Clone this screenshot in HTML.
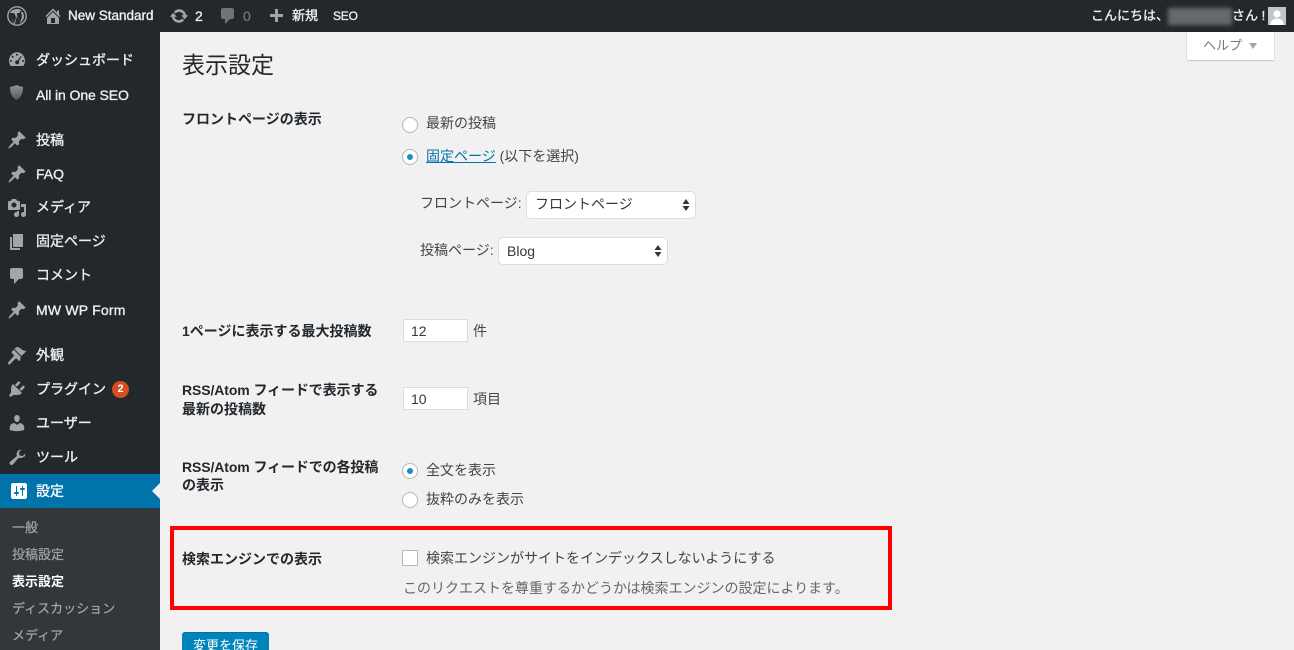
<!DOCTYPE html>
<html lang="ja"><head><meta charset="utf-8"><title>表示設定</title>
<style>
html,body{margin:0;padding:0;width:1294px;height:650px;overflow:hidden}
body{background:#f1f1f1;font:14px/20px "Liberation Sans","Noto Sans CJK JP",sans-serif;color:#444}
#w{position:relative;width:1294px;height:650px;overflow:hidden;background:#f1f1f1}
.a{position:absolute;white-space:nowrap}
#bar{position:absolute;left:0;top:0;width:1294px;height:32px;background:#23282d}
#side{position:absolute;left:0;top:32px;width:160px;height:618px;background:#23282d}
.m{color:#eee;left:36px;-webkit-text-stroke:.35px #eee}
.s{color:#a3a7ab;font-size:13px;left:12px;-webkit-text-stroke:.2px #a3a7ab}
.t{color:#eee;font-size:13px;-webkit-text-stroke:.35px #eee}
.l{color:#23282d;font-weight:700;left:182px}
.i{position:absolute;fill:#a0a5aa}
.radio{position:absolute;left:402px;width:14px;height:14px;border:1px solid #b4b9be;border-radius:50%;background:#fff}
.radio.on:after{content:"";position:absolute;left:4px;top:4px;width:6px;height:6px;border-radius:50%;background:#1e8cbe}
.sel{position:absolute;background:#fff;border:1px solid #ddd;border-radius:5px;height:26px;color:#32373c;line-height:24px}
.num{position:absolute;left:403px;width:63px;height:21px;background:#fff;border:1px solid #ddd;color:#32373c;line-height:21px}
</style></head><body><div id="w">
<div id="bar"></div>
<div id="side"></div>
<div class="a" style="left:0;top:474px;width:160px;height:34px;background:#0073aa"></div>
<div class="a" style="left:0;top:508px;width:160px;height:142px;background:#32373c"></div>
<div class="a" style="left:152px;top:483px;width:0;height:0;border:8px solid transparent;border-left:0;border-right-color:#f1f1f1"></div>

<!-- admin bar icons -->
<svg class="i" style="left:7px;top:6px" width="20" height="20" viewBox="0 0 20 20"><circle cx="10" cy="10" r="9.200" fill="none" stroke="#a0a5aa" stroke-width="1.400"/><path d="M3 7.200L7 17.500 9 11.700 7.600 7.400H6.300V6.700H11V7.400H9.600L12.900 17.300 14.600 11.900C15.200 10 15 8.800 14.200 7.600 13.900 7 14.200 5.600 15.600 5.700 17 8.300 17.300 10.800 16.500 13L13.200 17.800 10 9.800 7.900 18 6.600 17.700Z"/><path d="M3 6.800C4.400 4.400 7 3 10 3c2 0 3.700.7 5 1.800-1.400-.2-2.400 1-2.200 2.200H3z"/></svg>
<svg class="i" style="left:43px;top:6px" width="20" height="20" viewBox="0 0 20 20"><path fill-rule="evenodd" d="M16 8.500l1.530 1.530-1.060 1.060L10 4.620l-6.470 6.470-1.060-1.060L10 2.500l4 4v-2h2v4zm-6-2.460l6 5.990V18H4v-5.970zM12 17v-5H8v5h4z"/></svg>
<svg class="i" style="left:169px;top:6px" width="20" height="20" viewBox="0 0 20 20"><path d="M10.200 3.280c3.530 0 6.430 2.610 6.920 6h2.080l-3.500 4-3.500-4h2.320c-.45-1.970-2.210-3.440-4.320-3.440-1.450 0-2.730.71-3.540 1.780L4.950 5.660C6.230 4.200 8.110 3.280 10.200 3.280zm-.4 13.440c-3.520 0-6.430-2.610-6.920-6H.8l3.500-4c1.170 1.330 2.330 2.670 3.500 4H5.480c.45 1.970 2.210 3.440 4.320 3.440 1.450 0 2.730-.71 3.540-1.780l1.710 1.950c-1.280 1.460-3.150 2.390-5.250 2.390z"/></svg>
<svg class="i" style="left:218px;top:6px" width="20" height="20" viewBox="0 0 20 20"><path fill="#6f7479" d="M5 2h9c1.100 0 2 .9 2 2v7c0 1.100-.9 2-2 2h-2l-5 5v-5H5c-1.100 0-2-.9-2-2V4c0-1.100.9-2 2-2z"/></svg>
<svg class="i" style="left:266px;top:7px" width="20" height="20" viewBox="0 0 20 20"><path d="M17 7v3h-5v5H9v-5H4V7h5V2h3v5h5z"/></svg>

<span class="a t" style="left:68px;top:6px;font-size:13.500px">New Standard</span>
<span class="a t" style="left:195px;top:6px;font-size:14px">2</span>
<span class="a t" style="left:243px;top:6px;color:#6f7479;-webkit-text-stroke:.35px #6f7479;font-size:14px">0</span>
<span class="a t" style="left:292px;top:6px">新規</span>
<span class="a t" style="left:333px;top:6px;font-size:12px;letter-spacing:-.2px">SEO</span>
<span class="a t" style="left:1091px;top:6px">こんにちは、</span>
<div class="a" style="left:1168px;top:8px;width:64px;height:17px;background:#66696d;filter:blur(2px)"></div>
<span class="a t" style="left:1232px;top:6px">さん !</span>
<svg class="a" style="left:1268px;top:7px" width="18" height="18" viewBox="0 0 18 18"><rect width="18" height="18" fill="#c4c4c4"/><circle cx="9" cy="7" r="3.600" fill="#fff"/><path d="M2.500 18c0-5 3-6.500 6.500-6.500s6.500 1.500 6.500 6.500z" fill="#fff"/></svg>

<!-- side icons -->
<svg class="i" style="left:7px;top:50px" width="20" height="20" viewBox="0 0 20 20"><path fill-rule="evenodd" d="M3.760 16h12.480c1.100-1.430 1.760-3.230 1.760-5.180 0-4.710-3.580-8.530-8-8.530s-8 3.820-8 8.530c0 1.950.66 3.750 1.760 5.180zM10 3.800a1 1 0 1 1 0 2 1 1 0 0 1 0-2zM5.700 5.800a1 1 0 1 1 0 2 1 1 0 0 1 0-2zM3.900 10a1 1 0 1 1 0 2 1 1 0 0 1 0-2zM16.100 10a1 1 0 1 1 0 2 1 1 0 0 1 0-2zM13.800 6l.9.5-2.900 4.700c.3.300.4.700.4 1.100a2 2 0 1 1-2-2c.2 0 .4 0 .6.100z"/></svg>
<svg class="a" style="left:9px;top:84px" width="15" height="17" viewBox="0 0 15 17"><defs><linearGradient id="g" x1="0" y1="0" x2="0" y2="1"><stop offset="0" stop-color="#929496"/><stop offset="1" stop-color="#55585b"/></linearGradient></defs><path d="M7.500 1C10 2.200 12 2.700 14 2.700c0 6-1.500 10.500-6.500 13.300C2.500 13.200 1 8.700 1 2.700 3 2.700 5 2.200 7.500 1z" fill="url(#g)"/></svg>
<svg class="i" style="left:7px;top:130px" width="20" height="20" viewBox="0 0 20 20"><path d="M10.440 3.020l1.820-1.820 6.360 6.350-1.830 1.820c-1.050-.68-2.480-.57-3.410.36l-.75.75c-.92.93-1.040 2.350-.35 3.410l-1.830 1.820-2.410-2.410-2.800 2.790c-.42.42-3.380 2.710-3.800 2.290s1.860-3.390 2.280-3.810l2.790-2.790L4.100 9.360l1.830-1.820c1.050.69 2.480.57 3.400-.36l.75-.75c.93-.92 1.050-2.350.36-3.410z"/></svg>
<svg class="i" style="left:7px;top:164px" width="20" height="20" viewBox="0 0 20 20"><path d="M10.440 3.020l1.820-1.820 6.360 6.350-1.830 1.820c-1.050-.68-2.480-.57-3.410.36l-.75.75c-.92.93-1.040 2.350-.35 3.410l-1.830 1.820-2.410-2.410-2.800 2.790c-.42.42-3.380 2.710-3.800 2.290s1.860-3.390 2.280-3.810l2.790-2.790L4.100 9.360l1.830-1.820c1.050.69 2.480.57 3.400-.36l.75-.75c.93-.92 1.050-2.350.36-3.410z"/></svg>
<svg class="i" style="left:7px;top:198px" width="20" height="20" viewBox="0 0 20 20"><path fill-rule="evenodd" d="M13 11V4c0-.55-.45-1-1-1h-1.670L9 1H5L3.670 3H2c-.55 0-1 .45-1 1v7c0 .55.45 1 1 1h10c.55 0 1-.45 1-1zM7 4.500c1.380 0 2.500 1.120 2.500 2.500S8.380 9.500 7 9.500 4.500 8.380 4.500 7 5.620 4.500 7 4.500zM14 6h5v10.500c0 1.380-1.120 2.500-2.500 2.500S14 17.880 14 16.500s1.120-2.500 2.500-2.500c.17 0 .34.020.5.050V9h-3V6zm-4 8.050V13h2v3.500c0 1.380-1.120 2.500-2.500 2.500S7 17.880 7 16.500 8.120 14 9.500 14c.17 0 .34.020.5.050z"/></svg>
<svg class="i" style="left:7px;top:232px" width="20" height="20" viewBox="0 0 20 20"><path d="M6 15V2h10v13H6zm-1 1h8v2H3V5h2v11z"/></svg>
<svg class="i" style="left:7px;top:266px" width="20" height="20" viewBox="0 0 20 20"><path d="M5 2h9c1.100 0 2 .9 2 2v7c0 1.100-.9 2-2 2h-2l-5 5v-5H5c-1.100 0-2-.9-2-2V4c0-1.100.9-2 2-2z"/></svg>
<svg class="i" style="left:7px;top:300px" width="20" height="20" viewBox="0 0 20 20"><path d="M10.440 3.020l1.820-1.820 6.360 6.350-1.830 1.820c-1.050-.68-2.480-.57-3.410.36l-.75.75c-.92.93-1.040 2.350-.35 3.410l-1.830 1.820-2.410-2.410-2.800 2.790c-.42.42-3.380 2.710-3.800 2.290s1.860-3.390 2.280-3.810l2.790-2.790L4.100 9.360l1.830-1.820c1.050.69 2.480.57 3.400-.36l.75-.75c.93-.92 1.050-2.350.36-3.410z"/></svg>
<svg class="i" style="left:7px;top:345px" width="20" height="20" viewBox="0 0 20 20"><path d="M14.480 11.060L7.410 3.990l1.500-1.500c.5-.56 2.300-.47 3.510.32 1.210.8 1.430 1.280 2.910 2.100 1.180.64 2.450 1.260 4.450.85zm-.71.71L6.700 4.700 4.830 6.570c-.39.39-.39 1.030 0 1.420l1.770 1.770c.39.39.39 1.020 0 1.410L1.350 17.240c-.78.78-.78 1.030 0 1.810.78.78 1.030.78 1.810 0l5.250-5.250c.39-.39 1.020-.39 1.410 0l1.770 1.770c.39.39 1.030.39 1.420 0z"/></svg>
<svg class="i" style="left:7px;top:379px" width="20" height="20" viewBox="0 0 20 20"><path d="M13.110 4.360L9.870 7.600 8 5.730l3.240-3.240c.35-.34 1.050-.2 1.560.32.52.51.66 1.210.31 1.550zm-8 1.770l.91-1.120 9.010 9.010-1.190.84c-.71.71-2.630 1.160-3.820 1.160H6.140L4.900 17.260c-.59.59-1.540.59-2.120 0-.59-.58-.59-1.530 0-2.120l1.240-1.240v-3.880c0-1.130.4-3.190 1.090-3.890zm7.260 3.970l3.240-3.240c.34-.35 1.040-.21 1.550.31.52.51.66 1.210.31 1.560l-3.240 3.240z"/></svg>
<svg class="i" style="left:7px;top:413px" width="20" height="20" viewBox="0 0 20 20"><path d="M10 9.250c-2.270 0-2.730-3.440-2.730-3.440C7 4.020 7.820 2 9.970 2c2.160 0 2.980 2.020 2.710 3.810 0 0-.41 3.440-2.680 3.440zm0 2.570L12.720 10c2.390 0 4.520 2.330 4.520 4.530v2.490s-3.650 1.130-7.240 1.130c-3.650 0-7.240-1.130-7.240-1.130v-2.490c0-2.250 1.940-4.480 4.470-4.480z"/></svg>
<svg class="i" style="left:7px;top:447px" width="20" height="20" viewBox="0 0 20 20"><path d="M16.680 9.770c-1.340 1.340-3.300 1.670-4.950.98l-5.820 6.770c-.76.76-2 .76-2.760 0-.76-.76-.76-2 0-2.760l6.770-5.820c-.69-1.650-.36-3.610.98-4.950 1.010-1.010 2.390-1.480 3.700-1.360l-2.650 2.650.6 3.170 3.170.6 2.650-2.650c.12 1.310-.35 2.690-1.360 3.700z"/></svg>
<svg class="a" style="left:9px;top:481px" width="20" height="20" viewBox="0 0 20 20"><path fill="#fff" fill-rule="evenodd" d="M18 16V4c0-1.100-.9-2-2-2H4c-1.100 0-2 .9-2 2v12c0 1.100.9 2 2 2h12c1.100 0 2-.9 2-2zM8 11h1c.55 0 1 .45 1 1s-.45 1-1 1H8v1.500c0 .28-.22.5-.5.5s-.5-.22-.5-.5V13H6c-.55 0-1-.45-1-1s.45-1 1-1h1V5.500c0-.28.22-.5.5-.5s.5.22.5.5V11zm5-2h-1c-.55 0-1-.45-1-1s.45-1 1-1h1V5.500c0-.28.22-.5.5-.5s.5.22.5.5V7h1c.55 0 1 .45 1 1s-.45 1-1 1h-1v5.500c0 .28-.22.5-.5.5s-.5-.22-.5-.5V9z"/></svg>

<!-- side text -->
<span class="a m" style="top:50px">ダッシュボード</span>
<span class="a m" style="top:85px;letter-spacing:-.1px">All in One SEO</span>
<span class="a m" style="top:130px">投稿</span>
<span class="a m" style="top:164px">FAQ</span>
<span class="a m" style="top:197px">メディア</span>
<span class="a m" style="top:231px">固定ページ</span>
<span class="a m" style="top:265px">コメント</span>
<span class="a m" style="top:300px;letter-spacing:.2px">MW WP Form</span>
<span class="a m" style="top:345px">外観</span>
<span class="a m" style="top:379px">プラグイン</span>
<div class="a" style="left:112px;top:381px;width:17px;height:17px;border-radius:50%;background:#d54e21;color:#fff;font-size:11px;font-weight:700;line-height:17px;text-align:center">2</div>
<span class="a m" style="top:413px">ユーザー</span>
<span class="a m" style="top:447px">ツール</span>
<span class="a m" style="top:481px;color:#fff;-webkit-text-stroke:.35px #fff">設定</span>
<span class="a s" style="top:518px">一般</span>
<span class="a s" style="top:545px">投稿設定</span>
<span class="a s" style="top:572px;color:#fff;font-weight:700;-webkit-text-stroke:0">表示設定</span>
<span class="a s" style="top:599px">ディスカッション</span>
<span class="a s" style="top:626px">メディア</span>

<!-- help -->
<div class="a" style="left:1187px;top:32px;width:87px;height:28px;background:#fff;box-shadow:0 0 1px rgba(0,0,0,.25),0 1px 1px rgba(0,0,0,.15)"></div>
<span class="a" style="left:1203px;top:36px;font-size:13px;color:#72777c">ヘルプ</span>
<div class="a" style="left:1249px;top:43px;width:0;height:0;border:4.500px solid transparent;border-bottom:0;border-top:6px solid #a0a5aa"></div>

<!-- content -->
<span class="a" style="left:182px;top:50px;font-size:23px;line-height:30px;color:#23282d">表示設定</span>
<span class="a l" style="top:109px">フロントページの表示</span>
<div class="radio" style="top:117px"></div>
<span class="a" style="left:426px;top:113px">最新の投稿</span>
<div class="radio on" style="top:149px"></div>
<span class="a" style="left:426px;top:146px"><span style="color:#0073aa;text-decoration:underline">固定ページ</span> (以下を選択)</span>
<span class="a" style="left:420px;top:193px">フロントページ:</span>
<div class="sel" style="left:526px;top:191px;width:168px"><span class="a" style="left:8px;top:0">フロントページ</span><svg class="a" style="left:154px;top:6px" width="10" height="14" viewBox="0 0 10 14"><path d="M5 1L8.500 6h-7zM5 13L1.500 8h7z" fill="#32373c"/></svg></div>
<span class="a" style="left:420px;top:240px">投稿ページ:</span>
<div class="sel" style="left:498px;top:237px;width:168px"><span class="a" style="left:8px;top:1px">Blog</span><svg class="a" style="left:154px;top:6px" width="10" height="14" viewBox="0 0 10 14"><path d="M5 1L8.500 6h-7zM5 13L1.500 8h7z" fill="#32373c"/></svg></div>

<span class="a l" style="top:321px">1ページに表示する最大投稿数</span>
<div class="num" style="top:319px"><span class="a" style="left:7px;top:1px">12</span></div>
<span class="a" style="left:473px;top:321px">件</span>

<span class="a l" style="top:380px;letter-spacing:-.1px">RSS/Atom フィードで表示する</span>
<span class="a l" style="top:399px">最新の投稿数</span>
<div class="num" style="top:387px"><span class="a" style="left:7px;top:1px">10</span></div>
<span class="a" style="left:473px;top:389px">項目</span>

<span class="a l" style="top:457px;letter-spacing:-.1px">RSS/Atom フィードでの各投稿</span>
<span class="a l" style="top:475px">の表示</span>
<div class="radio on" style="top:463px"></div>
<span class="a" style="left:426px;top:460px">全文を表示</span>
<div class="radio" style="top:492px"></div>
<span class="a" style="left:426px;top:489px">抜粋のみを表示</span>

<span class="a l" style="top:549px">検索エンジンでの表示</span>
<div class="a" style="left:402px;top:550px;width:14px;height:14px;background:#fff;border:1px solid #b4b9be"></div>
<span class="a" style="left:426px;top:548px">検索エンジンがサイトをインデックスしないようにする</span>
<span class="a" style="left:403px;top:578px;color:#666">このリクエストを尊重するかどうかは検索エンジンの設定によります。</span>

<div class="a" style="left:170px;top:526px;width:714px;height:76px;border:4px solid #f00"></div>

<div class="a" style="left:182px;top:632px;width:87px;height:30px;background:#0085ba;border-top:1px solid #0073aa;border-radius:3px;color:#fff;font-size:13px;line-height:26px;text-align:center">変更を保存</div>
</div></body></html>
